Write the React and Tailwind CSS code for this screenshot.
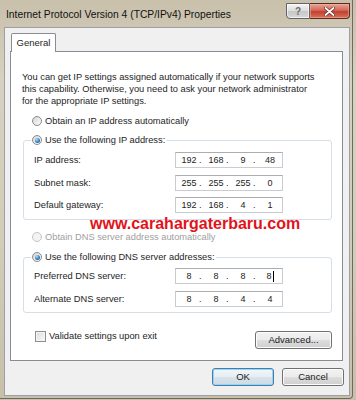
import React from "react";

const Radio = ({ checked, disabled }) => (
  <span
    className={
      disabled
        ? "inline-flex w-[10px] h-[10px] rounded-full border border-[#c6c6c6] bg-[#f3f3f3] items-center justify-center shrink-0"
        : "inline-flex w-[10px] h-[10px] rounded-full border border-[#8c8c8c] bg-[linear-gradient(135deg,#d4d4d4,#fdfdfd)] items-center justify-center shrink-0"
    }
  >
    {checked && (
      <span className="w-[5px] h-[5px] rounded-full bg-[radial-gradient(circle_at_35%_30%,#a9e0fb,#2a78c0_60%,#164f8c)]" />
    )}
  </span>
);

const Field = ({ v }) => (
  <span className="w-[14px] flex justify-center whitespace-nowrap">{v}</span>
);
const Dot = () => <span className="w-[13px] pl-[3px]">.</span>;

const IpBox = ({ parts, cursor }) => (
  <div className="w-[108px] h-[16px] border border-[#c9ccd1] border-t-[#abadb3] bg-white flex items-center pl-[6px] text-[9px] text-[#222]">
    <Field v={parts[0]} />
    <Dot />
    <Field v={parts[1]} />
    <Dot />
    <Field v={parts[2]} />
    <Dot />
    <span className="w-[14px] flex justify-center whitespace-nowrap">
      {parts[3]}
      {cursor && <span className="w-px h-[11px] bg-black ml-[1px] self-center" />}
    </span>
  </div>
);

const Row = ({ label, parts, cursor }) => (
  <div className="flex items-center h-[16px]">
    <span className="w-[151px] pl-[10px]">{label}</span>
    <IpBox parts={parts} cursor={cursor} />
  </div>
);

const btn =
  "h-[18px] rounded-[3px] border border-[#707070] bg-[linear-gradient(to_bottom,#f2f2f2_0%,#ebebeb_50%,#dddddd_51%,#cfcfcf_100%)] shadow-[inset_0_0_0_1px_#fcfcfc] flex items-center justify-center text-[9.5px] text-[#1a1a1a]";

export default function App() {
  return (
    <div className="w-[356px] h-[400px] overflow-hidden relative bg-[linear-gradient(to_bottom,#c8c0ab,#d8d1bf_20%,#d3ccb9_60%,#c7bfa9)] font-['Liberation_Sans',Arial,sans-serif] text-[#1e1e1e]">
      <div className="w-[353px] h-[399px] border-r border-b border-[#6d6a62] rounded-br-[4px] flex flex-col">
        {/* title bar */}
        <div className="h-[27px] flex justify-between shrink-0">
          <span className="pl-[6px] pt-[9px] text-[10.3px] leading-[12px] text-[#111]">
            Internet Protocol Version 4 (TCP/IPv4) Properties
          </span>
          <div className="flex pt-[3px] pr-[2px]">
            <div className="w-[24px] h-[16px] border border-[#5f6468] rounded-bl-[4px] bg-[linear-gradient(to_bottom,#f4f4f4,#dcdcdc_50%,#c6c6c6_51%,#d8d8d8)] flex items-center justify-center text-[10px] font-bold text-[#6a6a6a] shadow-[inset_0_0_0_1px_#ffffffa0]">
              ?
            </div>
            <div className="w-[40px] h-[16px] border border-l-0 border-[#5a2a22] rounded-br-[4px] bg-[linear-gradient(to_bottom,#e7a597,#d4665a_45%,#c2402c_55%,#d8745c)] flex items-center justify-center shadow-[inset_0_0_0_1px_#f0b8a880]">
              <svg width="11" height="9" viewBox="0 0 11 9">
                <path d="M1.5 1 L9.5 8 M9.5 1 L1.5 8" stroke="#5a2018" strokeWidth="3" strokeLinecap="round" />
                <path d="M1.5 1 L9.5 8 M9.5 1 L1.5 8" stroke="#ffffff" strokeWidth="1.8" strokeLinecap="round" />
              </svg>
            </div>
          </div>
        </div>

        {/* client */}
        <div className="ml-[4px] w-[346px] h-[369px] border border-[#9aa0a6] bg-[#f0f0f0] flex flex-col text-[9.3px] leading-[12px]">
          <div className="pt-[5px] pl-[6px] relative z-10 mb-[-1px]">
            <div className="w-[45px] h-[19px] bg-white border border-b-0 border-[#898c95] rounded-t-[2px] flex items-center justify-center text-[9.5px]">
              General
            </div>
          </div>
          <div className="ml-[5px] mr-[6px] border border-[#898c95] bg-white flex flex-col">
            <p className="pt-[19px] pl-[11px]">
              You can get IP settings assigned automatically if your network supports
              <br />
              this capability. Otherwise, you need to ask your network administrator
              <br />
              for the appropriate IP settings.
            </p>

            <div className="mt-[8px] pl-[21px] flex items-center gap-[3px] h-[12px]">
              <Radio />
              <span>Obtain an IP address automatically</span>
            </div>

            <fieldset className="mt-[7px] ml-[12px] mr-[10px] border border-[#d5dfe5] rounded-[3px] pb-[6px]">
              <legend className="ml-[7px] px-[1px] flex items-center gap-[3px] h-[12px]">
                <Radio checked />
                <span className="pr-[1px]">Use the following IP address:</span>
              </legend>
              <div className="mt-[6px] flex flex-col gap-[6.5px]">
                <Row label="IP address:" parts={["192", "168", "9", "48"]} />
                <Row label="Subnet mask:" parts={["255", "255", "255", "0"]} />
                <Row label="Default gateway:" parts={["192", "168", "4", "1"]} />
              </div>
            </fieldset>

            <div className="mt-[11px] pl-[21px] flex items-center gap-[3px] h-[12px] text-[#a0a0a0]">
              <Radio disabled />
              <span>Obtain DNS server address automatically</span>
            </div>

            <fieldset className="mt-[8px] ml-[12px] mr-[10px] border border-[#d5dfe5] rounded-[3px] pb-[5px]">
              <legend className="ml-[7px] px-[1px] flex items-center gap-[3px] h-[12px]">
                <Radio checked />
                <span className="pr-[1px]">Use the following DNS server addresses:</span>
              </legend>
              <div className="mt-[5px] flex flex-col gap-[7px]">
                <Row label="Preferred DNS server:" parts={["8", "8", "8", "8"]} cursor />
                <Row label="Alternate DNS server:" parts={["8", "8", "4", "4"]} />
              </div>
            </fieldset>

            <div className="mt-[18px] pl-[24px] pr-[10px] pb-[11px] flex justify-between items-start">
              <div className="flex items-center gap-[3px] mt-[-1px]">
                <span className="w-[11px] h-[11px] border border-[#8e8f8f] bg-[linear-gradient(135deg,#dcdcdc,#fafafa)] shadow-[inset_0_0_0_1px_#f4f4f4]" />
                <span>Validate settings upon exit</span>
              </div>
              <div className={btn + " w-[77px]"}>Advanced...</div>
            </div>
          </div>

          <div className="mt-[7px] pr-[5px] flex justify-end gap-[8px]">
            <div className="w-[62px] h-[18px] rounded-[3px] border border-[#3c7fb1] bg-[linear-gradient(to_bottom,#f2f7fa_0%,#e6eef3_50%,#d8e3ea_51%,#cddbe4_100%)] shadow-[inset_0_0_0_1px_#9fd2f2] flex items-center justify-center text-[9.5px] text-[#1a1a1a]">
              OK
            </div>
            <div className={btn + " w-[62px]"}>Cancel</div>
          </div>
        </div>
      </div>

      {/* watermark overlay */}
      <div className="absolute left-[90px] top-[214px] text-[16px] leading-[20px] font-bold text-[#e3121a] font-['Liberation_Sans',Arial,sans-serif] whitespace-nowrap">
        www.carahargaterbaru.com
      </div>
    </div>
  );
}
